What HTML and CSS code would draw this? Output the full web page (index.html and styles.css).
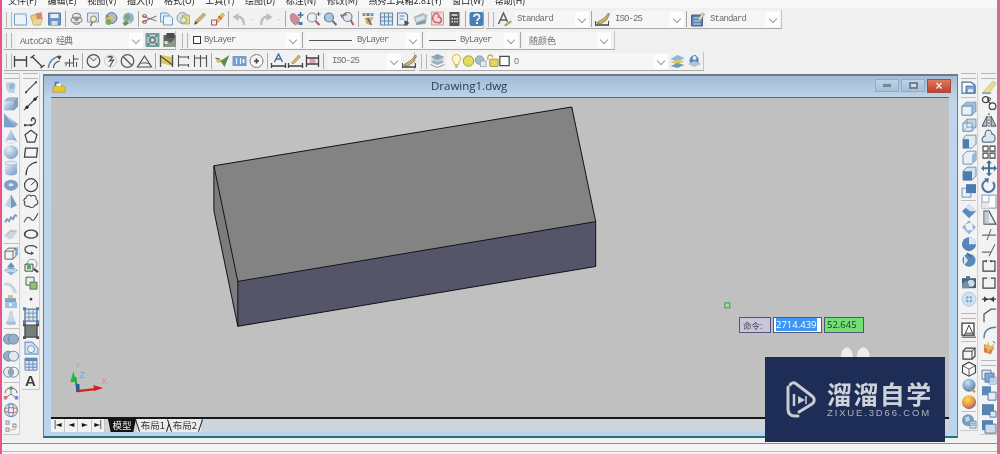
FILE: index.html
```html
<!DOCTYPE html>
<html lang="zh">
<head>
<meta charset="utf-8">
<title>Drawing1.dwg</title>
<link rel="stylesheet" href="styles.css">
</head>
<body>
<svg class="defs" xmlns="http://www.w3.org/2000/svg">
<defs>
<linearGradient id="gb" x1="0" y1="0" x2="1" y2="1"><stop offset="0" stop-color="#e4f0fb"/><stop offset="1" stop-color="#3f76b5"/></linearGradient>
<radialGradient id="gs" cx=".35" cy=".3" r=".8"><stop offset="0" stop-color="#dfeaf6"/><stop offset="1" stop-color="#4f7fb5"/></radialGradient>
<radialGradient id="gy" cx=".4" cy=".3" r=".8"><stop offset="0" stop-color="#ffd84a"/><stop offset=".55" stop-color="#e08a20"/><stop offset="1" stop-color="#5a2fa8"/></radialGradient>
<radialGradient id="gg" cx=".4" cy=".3" r=".8"><stop offset="0" stop-color="#bfe0f5"/><stop offset="1" stop-color="#2a5f9a"/></radialGradient>
</defs>
<symbol id="new" viewBox="0 0 16 16"><path d="M2 3h12v11H2z" fill="#eef5fc" stroke="#5e8fc0"/><path d="M10 3l4 4v-4z" fill="#b7d0ea"/></symbol>
<symbol id="open" viewBox="0 0 16 16"><path d="M1 5l8-3 1 4 3 1-2 7-7 0z" fill="#e8c860" stroke="#a98a3a" stroke-width=".7"/><path d="M6 3l6-2 1 6-5 2z" fill="#d8745e"/><path d="M3 10l8-2 1 4-7 2z" fill="#e9d690"/></symbol>
<symbol id="save" viewBox="0 0 16 16"><path d="M2 2h12v12H2z" fill="#5a86bc" stroke="#3f6a9e"/><path d="M4 3h8v4H4z" fill="#e6eef7"/><path d="M5 10h6v4H5z" fill="#cfdcea"/></symbol>
<symbol id="print" viewBox="0 0 16 16"><g fill="none" stroke="#7a7f8c" stroke-width="1.2"><ellipse cx="8" cy="5" rx="4" ry="2.6"/><ellipse cx="8" cy="9" rx="5.5" ry="2.8"/><path d="M5 12c1 2 5 2 6 0"/></g><path d="M6 8h4v2H6z" fill="#c46a6a"/></symbol>
<symbol id="prev" viewBox="0 0 16 16"><path d="M2 2h11v9H2z" fill="#d9e6f3" stroke="#6d8fb3"/><circle cx="8" cy="8" r="3" fill="#f3ecc0" stroke="#7a7a50"/><path d="M7 11l-2 4" stroke="#555" stroke-width="1.4"/></symbol>
<symbol id="pub" viewBox="0 0 16 16"><circle cx="9" cy="7" r="5.5" fill="#8fb4d8" stroke="#5b5f88"/><path d="M3 9c2-4 6-5 9-5l-2 5-5 4z" fill="#e2b93a"/><circle cx="6" cy="11" r="3" fill="#5fa04a"/><path d="M4 4l2 2" stroke="#7a4fa0" stroke-width="1.5"/></symbol>
<symbol id="web" viewBox="0 0 16 16"><circle cx="9" cy="7" r="5.5" fill="#7ea9cc"/><path d="M6 3c3 0 5 2 5 4l-3 2-3-2z" fill="#6f9a55"/><path d="M3 12l5-3 1 4-4 2z" fill="#5d7f4a"/><path d="M7 10h4v3" fill="#d6c25a"/></symbol>
<symbol id="cut" viewBox="0 0 16 16"><path d="M1 5l14 5M1 11l14-6" stroke="#6a6a78" stroke-width="1.1"/><ellipse cx="3" cy="5" rx="2" ry="1.4" fill="none" stroke="#a33" /><ellipse cx="3" cy="11" rx="2" ry="1.4" fill="none" stroke="#a33"/></symbol>
<symbol id="copy" viewBox="0 0 16 16"><path d="M2 2h7l2 2v7H2z" fill="#dbe8f5" stroke="#5e8fc0"/><path d="M5 5h7l2 2v7H5z" fill="#eef5fc" stroke="#5e8fc0"/></symbol>
<symbol id="paste" viewBox="0 0 16 16"><circle cx="7" cy="7" r="5.5" fill="#cfe0ee" stroke="#7a8c9c"/><path d="M7 4h7v9H7z" fill="#e7cf7a" stroke="#a98a3a" stroke-width=".7"/><circle cx="8" cy="9" r="3" fill="#d9e6c8" stroke="#6a8a4a" stroke-width=".7"/></symbol>
<symbol id="match" viewBox="0 0 16 16"><path d="M2 13l3-1 8-8-2-2-8 8z" fill="#d8a94a" stroke="#6a5a3a" stroke-width=".6"/><path d="M2 14l3-2-2-2z" fill="#333"/></symbol>
<symbol id="brush" viewBox="0 0 16 16"><path d="M6 10l7-8 2 2-7 8z" fill="#e9c43a" stroke="#8a6a20" stroke-width=".6"/><path d="M2 9h5v5H2z" fill="#e8eef5" stroke="#a33"/><path d="M9 5l3 3" stroke="#c33" stroke-width="1.5"/></symbol>
<symbol id="undo" viewBox="0 0 16 16"><path d="M12 14C13 8 9 5 5 6" fill="none" stroke="#b5b5b5" stroke-width="2.4"/><path d="M7 2L1 6l6 4z" fill="#b5b5b5"/></symbol>
<symbol id="redo" viewBox="0 0 16 16"><path d="M4 14C3 8 7 5 11 6" fill="none" stroke="#b5b5b5" stroke-width="2.4"/><path d="M9 2l6 4-6 4z" fill="#b5b5b5"/></symbol>
<symbol id="dot" viewBox="0 0 16 16"><path d="M6 8h4l-2 2z" fill="#b5b5b5"/></symbol>
<symbol id="pan" viewBox="0 0 16 16"><path d="M2 4c2-3 5-1 6 1 2 1 4 3 2 7l-3 2C3 12 1 8 2 4z" fill="#c87a86" stroke="#8a5a68" stroke-width=".6"/><path d="M12 1v6M9 4h6" stroke="#255a8a" stroke-width="1.6"/><path d="M10 11h4v3h-4z" fill="#2f6a9a"/></symbol>
<symbol id="zrt" viewBox="0 0 16 16"><circle cx="6.5" cy="6.5" r="4.5" fill="#eaf2f8" stroke="#6a7c8c" stroke-width="1.2"/><path d="M10 10l4 4" stroke="#8a5050" stroke-width="2"/><path d="M13 1v4M11 3h4" stroke="#4a4a4a"/></symbol>
<symbol id="zwin" viewBox="0 0 16 16"><circle cx="6.5" cy="6.5" r="4.5" fill="#9fc0de" stroke="#4d6a88" stroke-width="1.2"/><path d="M10 10l4 4" stroke="#5a5a5a" stroke-width="2.2"/></symbol>
<symbol id="zprev" viewBox="0 0 16 16"><circle cx="8" cy="6" r="4.5" fill="#dce8f2" stroke="#5d6f80" stroke-width="1.2"/><path d="M11 9l3 5" stroke="#a04a4a" stroke-width="2"/><path d="M1 4h6l-2-2M1 4l2 3" stroke="#444" fill="none"/></symbol>
<symbol id="props" viewBox="0 0 16 16"><g fill="#c454b0"><rect x="1" y="2" width="3" height="3"/></g><rect x="5" y="2" width="3" height="3" fill="#3a8a5a"/><rect x="9" y="2" width="3" height="3" fill="#5a8ac8"/><path d="M3 7l9-1-4 8-3-1z" fill="#caa53a"/><path d="M6 7l4 7" stroke="#3a3a7a" stroke-width="1.5"/></symbol>
<symbol id="dc" viewBox="0 0 16 16"><path d="M2 2h12v12H2z" fill="#dce8f2" stroke="#4d7a9e" stroke-width="1.2"/><path d="M2 6h12M2 10h12M6 2v12M10 2v12" stroke="#4d7a9e"/></symbol>
<symbol id="tool" viewBox="0 0 16 16"><path d="M2 2h8l2 2v10H2z" fill="#eaf2fa" stroke="#3f6ea0" stroke-width="1.1"/><path d="M4 5h5M4 8h4" stroke="#3f6ea0"/><path d="M9 9l5 3-5 3z" fill="#333"/></symbol>
<symbol id="sheet" viewBox="0 0 16 16"><path d="M1 6l9-4 5 2-2 9-9 1z" fill="#9fb3ba"/><path d="M3 7l9-3v4l-8 3z" fill="#d4e0e4"/><path d="M4 12l9-3v3l-9 2z" fill="#6f8a90"/></symbol>
<symbol id="mkp" viewBox="0 0 16 16"><path d="M2 1h12v13H2z" fill="#f3d4d4" stroke="#9a7a7a" stroke-width=".7"/><path d="M5 3c3-2 5 1 4 3 3 0 4 4 1 6l-5-1c-3-3-2-6 0-8z" fill="none" stroke="#d04a5a" stroke-width="1.6"/></symbol>
<symbol id="calc" viewBox="0 0 16 16"><path d="M3 1h10v14H3z" fill="#3a3a3a"/><path d="M5 3h6v2H5z" fill="#b8c4a0"/><path d="M5 7h1.500v1.500H5zM7.500 7H9v1.500H7.500zM10 7h1.500v1.500H10zM5 10h1.500v1.500H5zM7.500 10H9v1.500H7.500zM10 10h1.500v1.500H10z" fill="#ddd"/></symbol>
<symbol id="help" viewBox="0 0 16 16"><rect x="1" y="1" width="14" height="14" rx="2" fill="#2c6cb0"/><path d="M5.500 6c0-3.500 5.500-3.500 5.500 0 0 2-2.500 2-2.500 4" fill="none" stroke="#f2f6fa" stroke-width="1.700"/><path d="M7.500 11h2v2h-2z" fill="#f2f6fa"/></symbol>
<symbol id="ast" viewBox="0 0 16 16"><path d="M2 13L7 2l4 9M4 9h6" fill="none" stroke="#444" stroke-width="1.5"/><path d="M8 14l6-4 1 1-6 4z" fill="#d8a94a" stroke="#444" stroke-width=".5"/></symbol>
<symbol id="dst" viewBox="0 0 16 16"><path d="M1 14h13" stroke="#333" stroke-width="1.6"/><path d="M2 12l8-5 4-5 1 1-3 6-6 4z" fill="#d8a94a" stroke="#333" stroke-width=".6"/><path d="M1 10v5M14 10v5" stroke="#333"/></symbol>
<symbol id="tbs" viewBox="0 0 16 16"><path d="M2 4h11v11H2z" fill="#3d6ea8" stroke="#274a78"/><path d="M4 7h7M4 10h7M4 13h7" stroke="#cfe0f0"/><path d="M8 8l5-6 2 1-4 7z" fill="#d8d8a0" stroke="#555" stroke-width=".5"/></symbol>
<symbol id="w1" viewBox="0 0 16 16"><path d="M1 1h14v14H1z" fill="#5f8f8f"/><path d="M3 3h10v10H3z" fill="#d6e2e2"/><circle cx="8" cy="8" r="4" fill="#597a80"/><circle cx="8" cy="8" r="1.500" fill="#e6eeee"/><path d="M3 3h2v2H3zM11 3h2v2h-2zM3 11h2v2H3zM11 11h2v2h-2z" fill="#315a60"/></symbol>
<symbol id="w2" viewBox="0 0 16 16"><path d="M2 3h12v12H2z" fill="#4a4a4a"/><path d="M5 1h8v5H5z" fill="#2f2f2f"/><path d="M2 15l4-6 3 2 5-5v9z" fill="#7a8a7a"/><path d="M3 9h3v3H3z" fill="#ddd"/></symbol>
<symbol id="dl" viewBox="0 0 16 16"><path d="M2 3v11M14 3v11M2 7h12" stroke="#222" stroke-width="1.3" fill="none"/></symbol>
<symbol id="da" viewBox="0 0 16 16"><path d="M1 5l4-3M11 15l4-3M3 4l10 10" stroke="#222" stroke-width="1.3" fill="none"/></symbol>
<symbol id="dr" viewBox="0 0 16 16"><path d="M2 15C2 9 7 4 14 3" fill="none" stroke="#4d7fb0" stroke-width="1.5"/><path d="M7 15c0-3 2-6 6-7" fill="none" stroke="#333" stroke-width="1.2"/><path d="M10 3l5 0-2 4z" fill="#333"/></symbol>
<symbol id="dord" viewBox="0 0 16 16"><path d="M1 10h9M6 6v8M10 2v12M10 6h5M13 9v5" stroke="#333" fill="none" stroke-width="1"/><path d="M4 9l-2 4" stroke="#2e8a5a" stroke-width="1.4"/></symbol>
<symbol id="drad" viewBox="0 0 16 16"><circle cx="8" cy="8" r="6.300" fill="none" stroke="#333" stroke-width="1.2"/><path d="M4 4l4 4 3-3" stroke="#333" fill="none"/></symbol>
<symbol id="djog" viewBox="0 0 16 16"><path d="M9 3l-4 1h5l-3 4 4-1-4 7" stroke="#333" fill="none" stroke-width="1.2"/><circle cx="8" cy="8" r="6" fill="none" stroke="#aaa" stroke-width=".6"/></symbol>
<symbol id="ddia" viewBox="0 0 16 16"><circle cx="8" cy="8" r="6.300" fill="none" stroke="#444" stroke-width="1.3"/><path d="M4 4l8 8" stroke="#444" stroke-width="1.4"/></symbol>
<symbol id="dang" viewBox="0 0 16 16"><path d="M1 14h14L8 3z" fill="none" stroke="#333" stroke-width="1.2"/><path d="M4 11c3-2 6-1 9 0" fill="none" stroke="#333"/></symbol>
<symbol id="dq" viewBox="0 0 16 16"><path d="M2 2l12 2v9L2 10z" fill="#d7c34a"/><path d="M2 2v12M14 2v12M2 3l12 9" stroke="#333" stroke-width="1.3" fill="none"/></symbol>
<symbol id="dbase" viewBox="0 0 16 16"><path d="M3 2v12M13 3v3M13 11v3M3 4h10M3 12h10" stroke="#333" stroke-width="1.1" fill="none"/></symbol>
<symbol id="dcont" viewBox="0 0 16 16"><path d="M2 2v12M8 2v12M14 2v12M2 5h12" stroke="#333" stroke-width="1.1" fill="none"/></symbol>
<symbol id="qdim" viewBox="0 0 16 16"><path d="M2 5l6 2-3 3-3-1z" fill="#d6b43a"/><path d="M6 8l4 6 2-5 3-7-6 4z" fill="#3f7a3a"/><path d="M1 5l4 1" stroke="#333"/></symbol>
<symbol id="tol" viewBox="0 0 16 16"><rect x="1" y="3" width="14" height="10" fill="#5d8fc8"/><path d="M5 5v6M9 5v6" stroke="#eaf2fa" stroke-width="1.200"/><path d="M11 6h2v4h-2z" fill="#eaf2fa"/></symbol>
<symbol id="cen" viewBox="0 0 16 16"><circle cx="8" cy="8" r="6.500" fill="#f8f8f8" stroke="#666"/><path d="M8 5.500v5M5.500 8h5" stroke="#222" stroke-width="1.600"/></symbol>
<symbol id="aedit" viewBox="0 0 16 16"><path d="M4 9L8 1l4 8M5.500 6h5" stroke="#2f5f9a" stroke-width="1.500" fill="none"/><path d="M1 10v5M15 10v5M1 13h14" stroke="#222" stroke-width="1.300"/></symbol>
<symbol id="ped" viewBox="0 0 16 16"><path d="M1 10v5M15 10v5M1 13h14" stroke="#222" stroke-width="1.300"/><path d="M4 10l7-8 2 2-7 7z" fill="#d8a94a" stroke="#6a5a3a" stroke-width=".5"/></symbol>
<symbol id="dup" viewBox="0 0 16 16"><path d="M2 2v12M14 2v12M2 5h12M2 11h12" stroke="#222" stroke-width="1.300"/><rect x="5" y="6" width="6" height="4" fill="#d84a5a" opacity=".6"/></symbol>
<symbol id="lay" viewBox="0 0 16 16"><path d="M1 9l7 3 7-3-7-3z" fill="#8aa0b0"/><path d="M1 6.500l7 3 7-3-7-3z" fill="#b5c6d2"/><path d="M1 4l7 3 7-3-7-3z" fill="#7f98ac"/><path d="M1 11.500l7 3 7-3" stroke="#7a8a98" fill="none"/></symbol>
<symbol id="bulb" viewBox="0 0 14 16"><path d="M7 1a4.500 4.500 0 0 0-3 8l1 3h4l1-3a4.500 4.500 0 0 0-3-8z" fill="#fff7d0" stroke="#c0a838"/><path d="M5.500 13h3v2h-3z" fill="#99a"/></symbol>
<symbol id="sun" viewBox="0 0 14 16"><circle cx="7" cy="8" r="5.600" fill="#e5d94a" stroke="#888a40"/></symbol>
<symbol id="frz" viewBox="0 0 14 16"><circle cx="6" cy="7" r="4.600" fill="#9fb5c6" stroke="#7a8c9a"/><rect x="7" y="8" width="6" height="6" fill="#e3e9ee" stroke="#96a5b0"/></symbol>
<symbol id="lock" viewBox="0 0 14 16"><path d="M2 7V4a2.500 2.500 0 0 1 5 0" fill="none" stroke="#b39a3a" stroke-width="1.300"/><rect x="4" y="6" width="9" height="8" rx="1" fill="#e2d24a" stroke="#9a8a30"/></symbol>
<symbol id="sq" viewBox="0 0 14 16"><rect x="2" y="3" width="10" height="10" fill="#fff" stroke="#333" stroke-width="1.300"/></symbol>
<symbol id="lay2" viewBox="0 0 16 16"><path d="M1 6l7-4 7 3-7 4z" fill="#7fb0d6"/><path d="M1 9l7-2 7 1-7 4z" fill="#d9c24a"/><path d="M1 13l7-3 7 2-7 3z" fill="#5f8aaa"/></symbol>
<symbol id="lay3" viewBox="0 0 16 16"><path d="M3 8c0-4 3-6 6-6l3 3v5l-8 1z" fill="#3e77ad"/><circle cx="8" cy="5" r="2" fill="#dfe8f0"/><path d="M1 11l7-3 7 3-7 3z" fill="#a9bccb"/></symbol>
<symbol id="orb" viewBox="0 0 16 16"><path d="M3 3h8l2 3-2 8-6-1-2-5z" fill="#a8c5e2"/><path d="M6 5l5-1v5l-4 1z" fill="#6d9cc8"/></symbol>
<symbol id="box" viewBox="0 0 16 16"><path d="M1 6l4-4h10v9l-4 4H1z" fill="#7fa0c0"/><path d="M1 6h10v9H1z" fill="url(#gb)"/><path d="M11 6l4-4v9l-4 4z" fill="#5b7fa0"/></symbol>
<symbol id="wed" viewBox="0 0 16 16"><path d="M1 1l14 11-3 3H1z" fill="url(#gb)"/><path d="M1 1l11 14H1z" fill="#4d82b8"/></symbol>
<symbol id="cone" viewBox="0 0 16 16"><path d="M8 1L2 13c2 3 10 3 12 0z" fill="url(#gb)"/><path d="M2 13c2 3 10 3 12 0-3-1.500-9-1.500-12 0z" fill="#e4edf6"/></symbol>
<symbol id="sph" viewBox="0 0 16 16"><circle cx="8" cy="8" r="7" fill="url(#gs)"/></symbol>
<symbol id="cyl" viewBox="0 0 16 16"><path d="M2 3v10c2 3 10 3 12 0V3z" fill="url(#gb)"/><ellipse cx="8" cy="3" rx="6" ry="2" fill="#dce8f4" stroke="#6a8fb5" stroke-width=".6"/></symbol>
<symbol id="tor" viewBox="0 0 16 16"><ellipse cx="8" cy="8" rx="7" ry="5.500" fill="#4f80b0"/><ellipse cx="8" cy="7.500" rx="2.500" ry="1.500" fill="#dce8f2"/></symbol>
<symbol id="pyr" viewBox="0 0 16 16"><path d="M8 1L2 12l6 3z" fill="#a9c6e2"/><path d="M8 1l6 11-6 3z" fill="#4378ad"/></symbol>
<symbol id="hel" viewBox="0 0 16 16"><path d="M2 13l2-3 2 2 2-4 2 2 2-4 2 1" fill="none" stroke="#4a78a8" stroke-width="1.800"/></symbol>
<symbol id="pla" viewBox="0 0 16 16"><path d="M1 10l6-7 8 1-5 8-4 1z" fill="#c0cddb"/><path d="M3 9l5-4 5 0" stroke="#8aa0b5" fill="none"/></symbol>
<symbol id="pol" viewBox="0 0 16 16"><path d="M2 6h8v8H2z" fill="#eef3f8" stroke="#333"/><path d="M2 6l3-3h8v8l-3 3M10 6l3-3" fill="none" stroke="#333"/><path d="M13 3l2-2v8l-2 2z" fill="#5b8ec0"/></symbol>
<symbol id="ext" viewBox="0 0 16 16"><path d="M1 9l7-4 7 4-7 5z" fill="#5d8fc0"/><path d="M8 1L4 6h8z" fill="#2f6aa8"/><path d="M3 8h10v3H3z" fill="#aac7e2"/></symbol>
<symbol id="sw" viewBox="0 0 16 16"><path d="M1 5c5-2 10 1 13 9l-3 1C9 9 5 6 2 8z" fill="#b4c9dc"/></symbol>
<symbol id="rev" viewBox="0 0 16 16"><path d="M2 4h11v4H2z" fill="#4a8ac4"/><path d="M2 8h12v6H2z" fill="#7cb0dc"/><path d="M5 1h5v3H5z" fill="#d9a34a"/><path d="M6 9h3v3H6z" fill="#e4f0fb"/></symbol>
<symbol id="lof" viewBox="0 0 16 16"><path d="M6 1h4v4l3 8c0 2-10 2-10 0l3-8z" fill="#b6cde2"/><ellipse cx="8" cy="13" rx="5" ry="1.800" fill="#8fb0d0"/></symbol>
<symbol id="uni" viewBox="0 0 16 16"><circle cx="5.500" cy="8" r="5" fill="#6f95b8" stroke="#3f6080"/><circle cx="10.500" cy="8" r="5" fill="#6f95b8" stroke="#3f6080"/></symbol>
<symbol id="sub" viewBox="0 0 16 16"><circle cx="5.500" cy="8" r="5" fill="#6f95b8" stroke="#3f6080"/><circle cx="10.500" cy="8" r="5" fill="#dbe6ee" stroke="#3f6080"/></symbol>
<symbol id="int" viewBox="0 0 16 16"><circle cx="5.500" cy="8" r="5" fill="#dbe6ee" stroke="#3f6080"/><circle cx="10.500" cy="8" r="5" fill="none" stroke="#3f6080"/><path d="M8 4a5 5 0 0 1 0 8 5 5 0 0 1 0-8z" fill="#5f87ad"/></symbol>
<symbol id="m3" viewBox="0 0 16 16"><path d="M8 2v7l-6 4M8 9l6 4" stroke="#555" fill="none"/><circle cx="8" cy="3" r="2" fill="#3f9a4a"/><circle cx="2.500" cy="12.500" r="2" fill="#c84a4a"/><circle cx="13.500" cy="12.500" r="2" fill="#3f6ac8"/><path d="M2 8c0-7 12-7 12 0" fill="none" stroke="#333"/></symbol>
<symbol id="r3" viewBox="0 0 16 16"><circle cx="8" cy="8" r="6.500" fill="none" stroke="#3f9a6a" stroke-width="1.200"/><ellipse cx="8" cy="8" rx="6.500" ry="2.500" fill="none" stroke="#c84a4a" stroke-width="1.200"/><ellipse cx="8" cy="8" rx="2.500" ry="6.500" fill="none" stroke="#3f6ac8" stroke-width="1.200"/></symbol>
<symbol id="al3" viewBox="0 0 16 16"><path d="M3 3h3v3H3zM3 10h3v3H3zM10 6h3v3h-3z" fill="none" stroke="#777" stroke-width="1.100"/><path d="M7 12l6-1" stroke="#c8a040"/></symbol>
<symbol id="li" viewBox="0 0 16 16"><path d="M3 13L13 3" stroke="#2a2a2a" stroke-width="1.200"/><path d="M2 12h2v2H2zM12 2h2v2h-2z" fill="#2a2a2a"/></symbol>
<symbol id="xl" viewBox="0 0 16 16"><path d="M1 15L15 1" stroke="#222" stroke-width="1.300"/><circle cx="4" cy="12" r="1.600"/><circle cx="12" cy="4" r="1.600"/></symbol>
<symbol id="pli" viewBox="0 0 16 16"><path d="M1 13h7c5 0 6-7 2-7-2 0-2 2-1 3" fill="none" stroke="#222" stroke-width="1.200"/><path d="M1 12h2v2H1zM7 12h2v2H7zM9 5h2v2H9z" fill="#222"/></symbol>
<symbol id="pgn" viewBox="0 0 16 16"><path d="M8 2l6 4.500-2.300 7.500H4.300L2 6.500z" fill="none" stroke="#222" stroke-width="1.200"/></symbol>
<symbol id="rec" viewBox="0 0 16 16"><path d="M2.500 4h12l-1 9h-12z" fill="none" stroke="#222" stroke-width="1.300"/></symbol>
<symbol id="arc" viewBox="0 0 16 16"><path d="M3 15C3 8 7 3 14 2" fill="none" stroke="#222" stroke-width="1.300"/></symbol>
<symbol id="cir" viewBox="0 0 16 16"><circle cx="8" cy="8" r="6.500" fill="none" stroke="#222" stroke-width="1.200"/><path d="M8 8l4-4" stroke="#222"/></symbol>
<symbol id="cld" viewBox="0 0 16 16"><path d="M3 5c0-3 4-4 5-2 2-2 6 0 5 3 3 2 2 6-1 6-1 3-5 3-6 1-3 1-6-2-4-4-2-1-1-4 1-4z" fill="none" stroke="#333" stroke-width="1.100"/></symbol>
<symbol id="spl" viewBox="0 0 16 16"><path d="M1 13c3-6 5-6 7-3s4 0 7-6" fill="none" stroke="#333" stroke-width="1.100"/></symbol>
<symbol id="ell" viewBox="0 0 16 16"><ellipse cx="8" cy="8" rx="6.500" ry="4" fill="none" stroke="#222" stroke-width="1.400"/><path d="M1 8h2M13 8h2" stroke="#222"/></symbol>
<symbol id="ela" viewBox="0 0 16 16"><path d="M14 6c-2-4-12-3-12 1s5 5 8 4" fill="none" stroke="#333" stroke-width="1.300"/><path d="M8 9l3 2-3 2z" fill="#333"/></symbol>
<symbol id="ins" viewBox="0 0 16 16"><circle cx="9" cy="6" r="5" fill="none" stroke="#6a8a9c"/><path d="M2 6h8v7H2z" fill="#dfe9e0" stroke="#333"/><path d="M4 5l4 1v5H4z" fill="#4a9a4a"/><path d="M11 11l4 3" stroke="#222" stroke-width="2"/></symbol>
<symbol id="blk" viewBox="0 0 16 16"><path d="M3 2h8v8H3z" fill="#e6efe6" stroke="#444"/><path d="M7 7h7v7H7z" fill="#7fb86a" stroke="#3a6a3a"/></symbol>
<symbol id="pnt" viewBox="0 0 16 16"><circle cx="8" cy="8" r="1.300" fill="#222"/></symbol>
<symbol id="hat" viewBox="0 0 16 16"><path d="M2 2h12v12H2z" fill="#d8e4f0" stroke="#3d6a98" stroke-width="1.400"/><path d="M2 6h12M2 10h12M6 2v12M10 2v12" stroke="#3d6a98" stroke-width=".7"/><path d="M0 0h3v3H0zM13 0h3v3h-3zM0 13h3v3H0zM13 13h3v3h-3z" fill="#3d6a98"/></symbol>
<symbol id="gra" viewBox="0 0 16 16"><path d="M2 2h12v12H2z" fill="#5f6a68" stroke="#333" stroke-width="1.400"/><path d="M0 0h3v3H0zM13 0h3v3h-3zM0 13h3v3H0zM13 13h3v3h-3z" fill="#333"/></symbol>
<symbol id="reg" viewBox="0 0 16 16"><path d="M2 2h7l6 6v6H2z" fill="#cfe0f0" stroke="#5d89b8" stroke-width="1.100"/><circle cx="8" cy="9" r="3.500" fill="#eaf2fa" stroke="#5d89b8"/></symbol>
<symbol id="tab" viewBox="0 0 16 16"><path d="M2 2h12v12H2z" fill="#dfe9f5" stroke="#4b74b0"/><path d="M2 2h12v3H2z" fill="#4b74b0"/><path d="M2 8h12M2 11h12M6 5v9M10 5v9" stroke="#4b74b0"/></symbol>
<symbol id="r1" viewBox="0 0 16 16"><path d="M1 3h9l4 3v8H1z" fill="#fff" stroke="#2f5f90" stroke-width="1.200"/><path d="M5 7h9v7H5z" fill="#6d9cc8" stroke="#2f5f90"/><path d="M7 10h5v3H7z" fill="#dbe8f4"/></symbol>
<symbol id="cb1" viewBox="0 0 16 16"><path d="M1 6l4-4h10v9l-4 4H1z" fill="#8fb4d6" stroke="#3d6a98" stroke-width=".6"/><path d="M1 6h10v9H1z" fill="#e6f0f9" stroke="#3d6a98" stroke-width=".8"/></symbol>
<symbol id="cb2" viewBox="0 0 16 16"><path d="M2 6l4-4h9v8l-4 4H2z" fill="#b5cfe6" stroke="#4d7aa8" stroke-width=".8"/><path d="M2 6h9v8H2z" fill="#dce9f4" stroke="#4d7aa8" stroke-width=".8"/><path d="M6 2v8h9M6 10l-4 4" stroke="#4d7aa8" fill="none" stroke-width=".7"/></symbol>
<symbol id="cb3" viewBox="0 0 16 16"><path d="M2 6l3-4h10v9l-4 4H2z" fill="#dce9f4" stroke="#3d6a98" stroke-width=".8"/><path d="M2 6h6v9H2z" fill="#2f6aa8"/></symbol>
<symbol id="cb4" viewBox="0 0 16 16"><path d="M2 6l4-4h9v9l-4 4H2z" fill="#e4eef7" stroke="#3d6a98" stroke-width=".8"/><path d="M11 6l4-4v9l-4 4z" fill="#86aed2"/></symbol>
<symbol id="cb5" viewBox="0 0 16 16"><path d="M2 6l4-4h9v9l-4 4H2z" fill="#cde0f0" stroke="#3d6a98" stroke-width=".8"/><path d="M2 6h9v9H2z" fill="#2d68a6"/></symbol>
<symbol id="cb6" viewBox="0 0 16 16"><path d="M1 6h9v9H1z" fill="#e4eef7" stroke="#3d6a98" stroke-width=".8"/><path d="M5 2h10v9H5z" fill="#2d68a6"/></symbol>
<symbol id="d1" viewBox="0 0 16 16"><path d="M8 1l7 7-7 7-7-7z" fill="#3f7ab8"/><path d="M8 1l7 7-6 0-5-4z" fill="#cfe2f2"/></symbol>
<symbol id="d2" viewBox="0 0 16 16"><path d="M8 1l7 7-7 7-7-7z" fill="#88acd0"/><path d="M4 5l7-2 1 8-6 0z" fill="#e9f1f8"/></symbol>
<symbol id="d3" viewBox="0 0 16 16"><circle cx="8" cy="8" r="7" fill="#3a74ae"/><path d="M8 1a7 7 0 0 1 7 7H8z" fill="#d6e6f4"/></symbol>
<symbol id="d4" viewBox="0 0 16 16"><circle cx="8" cy="8" r="6.500" fill="#3f78b0"/><path d="M3 3l4 5-4 5z" fill="#d6e6f4"/><path d="M6 1l4 4" stroke="#2a5a8a" stroke-width="2"/></symbol>
<symbol id="pho" viewBox="0 0 16 16"><path d="M1 4h14v10H1z" fill="#2e4a66"/><circle cx="10" cy="9" r="3.500" fill="#c9d9e8"/><path d="M1 10l4-4 3 4v4H1z" fill="#5d7f9e"/><path d="M5 2h4v2H5z" fill="#3a5a78"/></symbol>
<symbol id="tar" viewBox="0 0 16 16"><circle cx="8" cy="8" r="7" fill="#cfe0ef" stroke="#a9c2d8"/><circle cx="8" cy="8" r="3.500" fill="#6a9ccc"/><path d="M8 4v8M4 8h8" stroke="#e9f1f8"/></symbol>
<symbol id="abx" viewBox="0 0 16 16"><rect x="1" y="1" width="12" height="12" fill="#fff" stroke="#222" stroke-width="1.300"/><path d="M3 14L8 3l5 11M5 11h6M1 15h14" stroke="#222" fill="none"/></symbol>
<symbol id="cu" viewBox="0 0 16 16"><path d="M2 6l3-3h9v8l-3 3H2z" fill="#f4f4f4" stroke="#222" stroke-width="1.200"/><path d="M2 6h9v8M11 6l3-3" fill="none" stroke="#222"/></symbol>
<symbol id="hex" viewBox="0 0 16 16"><path d="M8 1l6.500 3.500v7L8 15l-6.500-3.500v-7z" fill="#fafafa" stroke="#222" stroke-width="1.100"/><path d="M1.500 4.500L8 8l6.500-3.500M8 8v7" fill="none" stroke="#222" stroke-width=".8"/></symbol>
<symbol id="glo" viewBox="0 0 16 16"><circle cx="8" cy="7" r="6.500" fill="url(#gg)"/><path d="M9 10l5 4" stroke="#a58a3a" stroke-width="2"/></symbol>
<symbol id="bal" viewBox="0 0 16 16"><circle cx="8" cy="8" r="7" fill="url(#gy)"/></symbol>
<symbol id="glb" viewBox="0 0 16 16"><circle cx="7" cy="7" r="6" fill="#5e8fb8"/><path d="M4 4l4-1 1 4-4 2z" fill="#b6d0e4"/><path d="M9 8h6v7H9z" fill="#dce8f2" stroke="#5e7f9e"/><path d="M10 10h4M10 12h4" stroke="#5e7f9e"/></symbol>
<symbol id="era" viewBox="0 0 16 16"><path d="M2 13L12 2l3 2L8 14z" fill="#e7dd7a" stroke="#a9a060" stroke-width=".6"/><path d="M1 14h9" stroke="#6a8ab0" stroke-width="1.500"/></symbol>
<symbol id="cop" viewBox="0 0 16 16"><circle cx="4.500" cy="4.500" r="3" fill="#fff" stroke="#222" stroke-width="1.200"/><circle cx="11.500" cy="11" r="3.300" fill="#fff" stroke="#222" stroke-width="1.200"/><path d="M7 6l3 3" stroke="#222" stroke-width="1.200"/><circle cx="8" cy="4" r="1.500" fill="none" stroke="#222"/></symbol>
<symbol id="mir" viewBox="0 0 16 16"><path d="M8 1v14" stroke="#222" stroke-dasharray="2 1"/><path d="M6 4v10H1zM10 4v10h5z" fill="#a6b6c6" stroke="#222" stroke-width=".9"/></symbol>
<symbol id="off" viewBox="0 0 16 16"><path d="M7 2c4 0 4 4 4 4 4 0 4 8 0 8H2c-2-3 0-6 2-6 0-3 1-6 3-6z" fill="#dbe6f0" stroke="#44607c" stroke-width="1.200"/></symbol>
<symbol id="arr" viewBox="0 0 16 16"><path d="M2 2h5v5H2zM9 2h5v5H9zM2 9h5v5H2zM9 9h5v5H9z" fill="#fff" stroke="#222" stroke-width="1.100"/></symbol>
<symbol id="mov" viewBox="0 0 16 16"><path d="M8 0l3 3H9v4h4V5l3 3-3 3V9H9v4h2l-3 3-3-3h2V9H3v2L0 8l3-3v2h4V3H5z" fill="#26598a"/></symbol>
<symbol id="rot" viewBox="0 0 16 16"><path d="M6 3a6 6 0 1 0 6 2" fill="none" stroke="#2a5f90" stroke-width="2"/><path d="M3 1l5 0-1 5z" fill="#2a5f90"/></symbol>
<symbol id="sca" viewBox="0 0 16 16"><path d="M1 2h14v13H1z" fill="#fff" stroke="#8aa0b4" stroke-width="1.200"/><path d="M1 9h7v6H1z" fill="#e0e6ec"/><path d="M8 9V2M1 9h7" stroke="#8aa0b4"/></symbol>
<symbol id="str" viewBox="0 0 16 16"><path d="M3 2h5l7 13H3z" fill="#e6ecf2" stroke="#333" stroke-width="1.100"/><path d="M3 2h5v13H3z" fill="#9db0c0" opacity=".6"/></symbol>
<symbol id="tri" viewBox="0 0 16 16"><path d="M1 9h14M10 3l-4 11" stroke="#555" stroke-width="1.100"/></symbol>
<symbol id="ext2" viewBox="0 0 16 16"><path d="M1 10h9M14 2L8 14" stroke="#555" stroke-width="1.100"/></symbol>
<symbol id="bk1" viewBox="0 0 16 16"><path d="M2 3h12v10H2z" fill="none" stroke="#222" stroke-width="1.200"/><path d="M6 3h3" stroke="#e8e8e8" stroke-width="2"/><path d="M5 2v2M10 2v2" stroke="#222" stroke-width="1.200"/></symbol>
<symbol id="bk2" viewBox="0 0 16 16"><path d="M2 3h12v10H2z" fill="none" stroke="#222" stroke-width="1.200"/><path d="M6 3h4" stroke="#f0f0f0" stroke-width="2"/></symbol>
<symbol id="joi" viewBox="0 0 16 16"><path d="M1 8h14" stroke="#222" stroke-width="1.300"/><path d="M3 5l4 3-4 3zM13 5L9 8l4 3z" fill="#222"/></symbol>
<symbol id="cha" viewBox="0 0 16 16"><path d="M3 15V7l7-5h5" fill="none" stroke="#444" stroke-width="1.300"/></symbol>
<symbol id="fil" viewBox="0 0 16 16"><path d="M3 15c0-7 4-11 12-11" fill="none" stroke="#3a6ea0" stroke-width="1.500"/></symbol>
<symbol id="exp" viewBox="0 0 16 16"><path d="M3 4l10 3-3 7-7-2z" fill="#d8682a"/><path d="M7 1l2 5 5-3-3 5 4 2-6-1-2 4-1-5-4-1 4-2z" fill="#d8b84a"/><path d="M12 1l2 2" stroke="#333"/></symbol>
<symbol id="o1" viewBox="0 0 16 16"><path d="M1 1h9v9H1z" fill="#e2ecf6" stroke="#3d6a98"/><path d="M4 4h9v9H4z" fill="#6d9cc8" stroke="#3d6a98"/><path d="M8 8h7v7H8z" fill="#e2ecf6" stroke="#3d6a98" opacity=".6"/></symbol>
<symbol id="o2" viewBox="0 0 16 16"><path d="M1 1h9v9H1z" fill="#3f78b0"/><path d="M7 7h8v8H7z" fill="#e2ecf6" stroke="#3d6a98"/></symbol>
<symbol id="o3" viewBox="0 0 16 16"><path d="M1 2h12v11H1z" fill="#3a70a8"/><path d="M9 9h6v6H9z" fill="#dbe6f0" stroke="#3d6a98"/></symbol>
<symbol id="o4" viewBox="0 0 16 16"><path d="M1 2h11v10H1z" fill="#3a70a8"/><path d="M4 6h11v9H4z" fill="#c3d7ea" stroke="#3d6a98"/></symbol>
</svg>

<div class="app">
  <nav class="menu">
    <span>文件(F)</span><span>编辑(E)</span><span>视图(V)</span><span>插入(I)</span><span>格式(O)</span><span>工具(T)</span><span>绘图(D)</span><span>标注(N)</span><span>修改(M)</span><span>燕秀工具箱2.81(Y)</span><span>窗口(W)</span><span>帮助(H)</span>
  </nav>

  <div class="row">
    <div class="tb tb-a">
      <b class="grip"></b>
      <svg class="i"><use href="#new"/></svg><svg class="i"><use href="#open"/></svg><svg class="i"><use href="#save"/></svg><b class="sep"></b>
      <svg class="i"><use href="#print"/></svg><svg class="i"><use href="#prev"/></svg><svg class="i"><use href="#pub"/></svg><svg class="i"><use href="#web"/></svg><b class="sep"></b>
      <svg class="i"><use href="#cut"/></svg><svg class="i"><use href="#copy"/></svg><svg class="i"><use href="#paste"/></svg><svg class="i"><use href="#match"/></svg><svg class="i"><use href="#brush"/></svg><b class="sep"></b>
      <svg class="i"><use href="#undo"/></svg><svg class="i nar"><use href="#dot"/></svg><svg class="i"><use href="#redo"/></svg><svg class="i nar"><use href="#dot"/></svg><b class="sep"></b>
      <svg class="i"><use href="#pan"/></svg><svg class="i"><use href="#zrt"/></svg><svg class="i"><use href="#zwin"/></svg><svg class="i"><use href="#zprev"/></svg><b class="sep"></b>
      <svg class="i"><use href="#props"/></svg><svg class="i"><use href="#dc"/></svg><svg class="i"><use href="#tool"/></svg><svg class="i"><use href="#sheet"/></svg><svg class="i"><use href="#mkp"/></svg><svg class="i"><use href="#calc"/></svg><b class="sep"></b>
      <svg class="i"><use href="#help"/></svg>
    </div>
    <div class="tb tb-b">
      <b class="grip"></b>
      <svg class="i"><use href="#ast"/></svg>
      <div class="combo w76"><span class="mono">Standard</span><i class="chev"></i></div><b class="sep"></b>
      <svg class="i"><use href="#dst"/></svg>
      <div class="combo w73"><span class="mono">ISO-25</span><i class="chev"></i></div><b class="sep"></b>
      <svg class="i"><use href="#tbs"/></svg>
      <div class="combo w74"><span class="mono">Standard</span><i class="chev"></i></div>
    </div>
  </div>

  <div class="row">
    <div class="tb tb-c">
      <b class="grip"></b>
      <div class="combo w127 ml"><span class="mono">AutoCAD 经典</span><i class="chev"></i></div>
      <svg class="i"><use href="#w1"/></svg><svg class="i"><use href="#w2"/></svg>
    </div>
    <div class="tb tb-d">
      <b class="grip"></b>
      <div class="combo w110"><span class="sw"></span><span class="mono">ByLayer</span><i class="chev"></i></div><b class="sep"></b>
      <div class="combo w115"><span class="ln"></span><span class="mono">ByLayer</span><i class="chev"></i></div><b class="sep"></b>
      <div class="combo w93"><span class="ln short"></span><span class="mono">ByLayer</span><i class="chev"></i></div><b class="sep"></b>
      <div class="combo w88"><span class="cjk">随颜色</span><i class="chev"></i></div>
    </div>
  </div>

  <div class="row">
    <div class="tb tb-e">
      <b class="grip"></b>
      <svg class="i"><use href="#dl"/></svg><svg class="i"><use href="#da"/></svg><svg class="i"><use href="#dr"/></svg><svg class="i"><use href="#dord"/></svg><b class="sep"></b>
      <svg class="i"><use href="#drad"/></svg><svg class="i"><use href="#djog"/></svg><svg class="i"><use href="#ddia"/></svg><svg class="i"><use href="#dang"/></svg><b class="sep"></b>
      <svg class="i"><use href="#dq"/></svg><svg class="i"><use href="#dbase"/></svg><svg class="i"><use href="#dcont"/></svg><b class="sep"></b>
      <svg class="i"><use href="#qdim"/></svg><svg class="i"><use href="#tol"/></svg><svg class="i"><use href="#cen"/></svg><b class="sep"></b>
      <svg class="i"><use href="#aedit"/></svg><svg class="i"><use href="#ped"/></svg><svg class="i"><use href="#dup"/></svg><b class="sep"></b>
      <div class="combo w73 ml"><span class="mono">ISO-25</span><i class="chev"></i></div>
      <svg class="i"><use href="#dst"/></svg>
    </div>
    <div class="tb tb-f">
      <b class="grip"></b>
      <svg class="i"><use href="#lay"/></svg>
      <div class="combo w221">
        <svg class="s"><use href="#bulb"/></svg><svg class="s"><use href="#sun"/></svg><svg class="s"><use href="#frz"/></svg><svg class="s"><use href="#lock"/></svg><svg class="s"><use href="#sq"/></svg>
        <span class="zero">0</span><i class="chev"></i>
      </div>
      <svg class="i"><use href="#lay2"/></svg><svg class="i"><use href="#lay3"/></svg>
    </div>
  </div>

  <main class="main">
    <aside class="dock dock-l">
      <div class="col">
        <b class="hgrip"></b>
        <svg class="v"><use href="#orb"/></svg><svg class="v"><use href="#box"/></svg><svg class="v"><use href="#wed"/></svg><svg class="v"><use href="#cone"/></svg><svg class="v"><use href="#sph"/></svg><svg class="v"><use href="#cyl"/></svg><svg class="v"><use href="#tor"/></svg><svg class="v"><use href="#pyr"/></svg><svg class="v"><use href="#hel"/></svg><svg class="v"><use href="#pla"/></svg>
        <b class="hsep"></b>
        <svg class="v"><use href="#pol"/></svg><svg class="v"><use href="#ext"/></svg><svg class="v"><use href="#sw"/></svg><svg class="v"><use href="#rev"/></svg><svg class="v"><use href="#lof"/></svg>
        <b class="hsep big"></b>
        <svg class="v"><use href="#uni"/></svg><svg class="v"><use href="#sub"/></svg><svg class="v"><use href="#int"/></svg>
        <b class="hsep big"></b>
        <svg class="v"><use href="#m3"/></svg><svg class="v"><use href="#r3"/></svg><svg class="v"><use href="#al3"/></svg>
      </div>
      <div class="col">
        <b class="hgrip"></b>
        <svg class="v"><use href="#li"/></svg><svg class="v"><use href="#xl"/></svg><svg class="v"><use href="#pli"/></svg><svg class="v"><use href="#pgn"/></svg><svg class="v"><use href="#rec"/></svg><svg class="v"><use href="#arc"/></svg><svg class="v"><use href="#cir"/></svg><svg class="v"><use href="#cld"/></svg><svg class="v"><use href="#spl"/></svg><svg class="v"><use href="#ell"/></svg><svg class="v"><use href="#ela"/></svg><svg class="v"><use href="#ins"/></svg><svg class="v"><use href="#blk"/></svg><svg class="v"><use href="#pnt"/></svg><svg class="v"><use href="#hat"/></svg><svg class="v"><use href="#gra"/></svg><svg class="v"><use href="#reg"/></svg><svg class="v"><use href="#tab"/></svg>
        <span class="v atext">A</span>
      </div>
    </aside>

    <section class="win">
      <header class="title">
        <svg class="app-ico" viewBox="0 0 16 16"><path d="M1 8l6-3 8 3v6H1z" fill="#e9c52e" stroke="#8a7a20" stroke-width=".5"/><path d="M3 2h5v5H3z" fill="#4d7ab8"/><path d="M5 4h5v3H5z" fill="#eef3f8"/></svg>
        <span class="title-t">Drawing1.dwg</span>
        <div class="wbtns">
          <span class="wb"><i class="g-min"></i></span><span class="wb"><i class="g-max"></i></span><span class="wb close"><i class="g-x">×</i></span>
        </div>
      </header>
      <div class="canvas">
        <svg class="draw" viewBox="51 98 898 320">
          <polygon points="213,166 237,282 237,327 213,211" fill="#7c7c7e"/>
          <polygon points="213,166 572,107 596,222 237,282" fill="#838383"/>
          <polygon points="237,282 596,222 596,267 237,327" fill="#55556a"/>
          <g fill="none" stroke="#111" stroke-width="1">
            <polyline points="213,166 572,107 596,222 596,267 237,327 213,211 213,166"/>
            <polyline points="213,166 237,282 596,222"/>
            <path d="M237,282V327"/>
          </g>
          <ellipse cx="848" cy="358" rx="6" ry="10" fill="#ececec"/>
          <ellipse cx="864.500" cy="358" rx="6.500" ry="10" fill="#ececec"/>
          <rect x="725.500" y="303.500" width="5" height="5" fill="#b4d4a8" stroke="#3aa04a"/>
          <g class="ucs">
            <path d="M76 392L74 378" stroke="#2a9a3a" stroke-width="2"/>
            <path d="M72 372l3 11h-6z" fill="#14c03a"/>
            <path d="M76.500 385v8" stroke="#1f5fa0" stroke-width="3.500"/>
            <path d="M76 392l18-2" stroke="#d02020" stroke-width="2.200"/>
            <path d="M102 389l-10-3 1 6z" fill="#d82020"/>
            <text x="74" y="369" class="ut ut-y">Y</text>
            <text x="78" y="379" class="ut ut-z">Z</text>
            <text x="100" y="385" class="ut ut-x">X</text>
          </g>
        </svg>
        <div class="cmd">
          <span class="cmd-l">命令:</span>
          <span class="cmd-i"><em>2714.439</em></span>
          <span class="cmd-g">52.645</span>
        </div>
      </div>
      <div class="tabs">
        <div class="nav"><span>|◄</span><span>◄</span><span>►</span><span>►|</span></div>
        <span class="tab on">模型</span><span class="tab">布局1</span><span class="tab">布局2</span>
      </div>
    </section>

    <aside class="dock dock-r">
      <div class="col">
        <b class="hgrip"></b>
        <svg class="v"><use href="#r1"/></svg>
        <b class="hsep big"></b>
        <svg class="v"><use href="#cb1"/></svg><svg class="v"><use href="#cb2"/></svg><svg class="v"><use href="#cb3"/></svg><svg class="v"><use href="#cb4"/></svg><svg class="v"><use href="#cb5"/></svg><svg class="v"><use href="#cb6"/></svg>
        <b class="hsep big"></b>
        <svg class="v"><use href="#d1"/></svg><svg class="v"><use href="#d2"/></svg><svg class="v"><use href="#d3"/></svg><svg class="v"><use href="#d4"/></svg>
        <b class="hsep clear"></b>
        <svg class="v"><use href="#pho"/></svg><svg class="v"><use href="#tar"/></svg>
        <b class="hgrip mid wide"></b>
        <svg class="v"><use href="#abx"/></svg>
        <b class="hsep wider"></b>
        <svg class="v"><use href="#cu"/></svg><svg class="v"><use href="#hex"/></svg><svg class="v"><use href="#glo"/></svg><svg class="v"><use href="#bal"/></svg>
        <b class="hsep"></b>
        <svg class="v"><use href="#glb"/></svg>
      </div>
      <div class="col">
        <b class="hgrip"></b>
        <svg class="v"><use href="#era"/></svg><svg class="v"><use href="#cop"/></svg><svg class="v"><use href="#mir"/></svg><svg class="v"><use href="#off"/></svg><svg class="v"><use href="#arr"/></svg><svg class="v"><use href="#mov"/></svg><svg class="v"><use href="#rot"/></svg><svg class="v"><use href="#sca"/></svg><svg class="v"><use href="#str"/></svg><svg class="v"><use href="#tri"/></svg><svg class="v"><use href="#ext2"/></svg><svg class="v"><use href="#bk1"/></svg><svg class="v"><use href="#bk2"/></svg><svg class="v"><use href="#joi"/></svg><svg class="v"><use href="#cha"/></svg><svg class="v"><use href="#fil"/></svg><svg class="v"><use href="#exp"/></svg>
        <b class="hgrip mid"></b>
        <svg class="v"><use href="#o1"/></svg><svg class="v"><use href="#o2"/></svg><svg class="v"><use href="#o3"/></svg><svg class="v"><use href="#o4"/></svg>
      </div>
    </aside>
  </main>

  <footer class="status"></footer>

  <div class="mark">
    <svg class="mark-logo" viewBox="0 0 36 38"><path d="M8 6v22c0 5 3 7 7 7h3" fill="none" stroke="#c9ccd4" stroke-width="3" stroke-linecap="round"/><path d="M10 4c0-1 3-3 5-2l17 13c3 2 3 6 0 8L19 31" fill="none" stroke="#c9ccd4" stroke-width="3" stroke-linecap="round"/><path d="M14 13v12" stroke="#c9ccd4" stroke-width="2.500"/><path d="M18 15l7 4-7 4z" fill="#c9ccd4"/><path d="M26 15v8" stroke="#c9ccd4" stroke-width="1.600"/></svg>
    <div class="mark-t">
      <div class="mark-cn">溜溜自学</div>
      <div class="mark-en">ZIXUE.3D66.COM</div>
    </div>
  </div>
</div>
</body>
</html>
```
FILE: styles.css
```css
* { box-sizing: border-box; }
html, body { margin: 0; padding: 0; }
body { width: 1000px; height: 454px; overflow: hidden; background: #f0f0f0; }
.defs { position: absolute; width: 0; height: 0; }

.app {
  position: relative;
  width: 1000px;
  height: 454px;
  overflow: hidden;
  display: flex;
  flex-direction: column;
  background: #f0f0f0;
  border-left: 2px solid #e8528f;
  border-right: 3px solid #cf6f8d;
  font-family: "Noto Sans CJK SC", "Liberation Sans", sans-serif;
  filter: blur(.45px);
}

.menu {
  height: 8px;
  flex: none;
  display: flex;
  gap: 10.4px;
  padding-left: 6px;
  background: #f8f8f8;
  overflow: hidden;
  font-size: 9px;
  line-height: 14px;
  color: #222;
}
.menu span { margin-top: -6px; white-space: nowrap; }

.row {
  flex: none;
  display: flex;
  gap: 2px;
  height: 19px;
  margin-top: 2px;
  padding-left: 2px;
}
.tb {
  display: flex;
  align-items: center;
  height: 19px;
  background: #f1f1f1;
  border-bottom: 1px solid #a9a9a9;
  border-right: 1px solid #c4c4c4;
}
.tb-a { width: 480px; }
.tb-b { width: 296px; }
.tb-c { width: 172px; }
.tb-d { width: 435px; margin-left: 2px; }
.tb-e { width: 411px; }
.tb-f { width: 285px; margin-left: 2px; }

.grip {
  flex: none;
  width: 6px;
  height: 15px;
  margin: 0 2px;
  border-left: 1px solid #b6b6b6;
  border-right: 1px solid #b6b6b6;
}
.tb-a .grip, .tb-e .grip { margin-right: 0; }
.i { flex: none; width: 17px; height: 16px; opacity: .85; }
.i.nar { width: 9px; }
.sep { flex: none; width: 1px; height: 16px; margin: 0 2px; background: #a8a8a8; }

.combo {
  flex: none;
  display: flex;
  align-items: center;
  height: 17px;
  padding-left: 3px;
  background: #f6f6f6;
  overflow: hidden;
}
.ml { margin-left: 2px; }
.w76 { width: 76px; }
.w73 { width: 73px; }
.w74 { width: 74px; }
.w127 { width: 127px; margin-right: 1px; }
.w110 { width: 110px; }
.w115 { width: 115px; }
.w93 { width: 93px; }
.w88 { width: 88px; }
.w221 { width: 221px; margin: 0 1px; }
.mono {
  font-family: "Liberation Mono", "Noto Sans CJK SC", monospace;
  font-size: 9px;
  letter-spacing: -.9px;
  color: #6e6e6e;
  white-space: nowrap;
  padding-left: 1px;
}
.cjk { font-size: 9px; color: #707070; padding-left: 3px; }
.chev {
  flex: none;
  position: relative;
  width: 14px;
  height: 15px;
  margin-left: auto;
  background: #fdfdfd;
}
.chev::after {
  content: "";
  position: absolute;
  left: 4px;
  top: 4px;
  width: 5px;
  height: 5px;
  border-right: 1px solid #9a9a9a;
  border-bottom: 1px solid #9a9a9a;
  transform: rotate(45deg);
}
.sw { flex: none; width: 8px; height: 8px; margin-right: 2px; border: 1px solid #333; background: #fff; }
.ln { flex: none; width: 43px; height: 1px; margin: 0 4px 0 1px; background: #555; }
.ln.short { width: 27px; margin-right: 3px; }
.s { flex: none; width: 13px; height: 16px; margin-right: -1px; opacity: .9; }
.zero { font-size: 9px; color: #777; padding-left: 4px; font-family: "Liberation Sans", sans-serif; }

.main {
  flex: none;
  display: flex;
  height: 366px;
  margin-top: 2px;
  gap: 2px;
}
.dock { flex: none; display: flex; gap: 2px; padding-left: 1px; }
.dock-l { width: 39px; }
.dock-r { width: 37px; padding-left: 0; }
.col {
  flex: none;
  display: flex;
  flex-direction: column;
  align-items: center;
  width: 18px;
  align-self: flex-start;
  background: #f3f3f3;
  border-bottom: 1px solid #c8c8c8;
  border-right: 1px solid #d0d0d0;
}
.dock-l .col:first-child { width: 17px; }
.dock-l .col:first-child .v { opacity: .72; }
.dock-r .v, .dock-l .col + .col .v { opacity: .85; }
.hgrip { flex: none; width: 15px; height: 6px; border-top: 1px solid #b8b8b8; border-bottom: 1px solid #b8b8b8; }
.hgrip.mid { margin: 4px 0 3px; }
.hgrip.wide { margin-top: 6px; }
.hsep { flex: none; width: 15px; height: 1px; margin: 1px 0; background: #c0c0c0; }
.hsep.big { margin: 2px 0; }
.hsep.wider { margin: 3px 0; }
.hsep.clear { background: none; margin: 2px 0 3px; }
.v { flex: none; display: block; width: 16px; height: 16.3px; }
.atext {
  font-family: "Liberation Sans", sans-serif;
  font-size: 15px;
  font-weight: 700;
  line-height: 17px;
  text-align: center;
  color: #222;
}

.win {
  flex: none;
  display: flex;
  flex-direction: column;
  width: 915px;
  height: 364px;
  margin-top: 1px;
  padding: 0 8px 6px 7px;
  border: 1px solid #6d7a84;
  border-top: 2px solid #6f7a84;
  border-bottom: 2px solid #2c6f78;
  background: linear-gradient(#a3bcd9, #c0d6ea 24px, #b9d5ee);
}
.title {
  flex: none;
  display: flex;
  align-items: center;
  height: 21px;
  position: relative;
}
.app-ico { width: 14px; height: 14px; margin-left: 1px; }
.title-t {
  position: absolute;
  left: 380px;
  top: 2px;
  font-family: "Open Sans", sans-serif;
  font-size: 11.5px;
  color: #2f3f50;
}
.wbtns { display: flex; gap: 2px; margin-left: auto; margin-right: -2px; margin-top: -1px; }
.wb {
  display: flex;
  align-items: center;
  justify-content: center;
  width: 24px;
  height: 13px;
  border: 1px solid #8fabc6;
  background: linear-gradient(#bcd2e7, #a8c0d8);
}
.wb.close { height: 14px; border-color: #a8493a; background: linear-gradient(#dd7a5e, #c0402a); }
.g-min { width: 8px; height: 3px; background: #8092a6; border: 1px solid #6d7f92; }
.g-max { width: 9px; height: 7px; border: 2px solid #6f8196; background: #d0dce8; }
.g-x { font: 700 12px/12px "Liberation Sans", sans-serif; color: #f4e8e4; }

.canvas {
  flex: none;
  position: relative;
  height: 322px;
  background: #c0c0c0;
  border-top: 1px solid #6a6a6a;
  border-bottom: 2px solid #161616;
}
.draw { display: block; width: 898px; height: 319px; }
.ut { font: 8px "Liberation Sans", sans-serif; }
.ut-y { fill: #7ec87e; }
.ut-z { fill: #6ea8e0; font-size: 9px; }
.ut-x { fill: #dd8a8a; font-size: 9px; }

.cmd {
  position: absolute;
  left: 688px;
  top: 219px;
  display: flex;
  gap: 2px;
  height: 16px;
  font-family: "Open Sans", "Noto Sans CJK SC", sans-serif;
  font-size: 9.500px;
  line-height: 14px;
}
.cmd span { display: block; border: 1px solid #55557a; white-space: nowrap; }
.cmd-l { width: 32px; background: #c9c6dc; color: #444; padding-left: 3px; font-size: 8.500px; font-family: "Noto Sans CJK SC", sans-serif; }
.cmd-i { width: 49px; background: #fff; padding-left: 2px; }
.cmd-i em { font-style: normal; background: #3b96f5; color: #fff; }
.cmd-g { width: 40px; background: #73e073; color: #2a3a2a; padding-left: 2px; }

.tabs {
  flex: none;
  display: flex;
  align-items: stretch;
  height: 13px;
  background: #cdd4da;
  font-size: 9.500px;
  line-height: 12px;
}
.nav { display: flex; width: 54px; margin-right: 3px; background: #f2f2f2; }
.nav span {
  flex: 1;
  text-align: center;
  font: 8px/12px "DejaVu Sans", sans-serif;
  color: #111;
  letter-spacing: -1px;
  border-right: 1px solid #c8c8c8;
}
.tab {
  position: relative;
  width: 32px;
  text-align: center;
  background: #ececec;
  color: #333;
}
.tab::before, .tab::after {
  content: "";
  position: absolute;
  top: 0;
  width: 1px;
  height: 13px;
  background: #222;
}
.tab::before { left: 0; transform: rotate(-18deg); }
.tab::after { right: 0; transform: rotate(18deg); }
.tab.on {
  width: 28px;
  background: #111;
  color: #eee;
  margin-right: 1px;
  clip-path: polygon(0 0, 100% 0, 90% 100%, 10% 100%);
}

.status {
  flex: none;
  height: 14px;
  margin-top: 2px;
  background: linear-gradient(#f4f4f4 0 2px, #8c8c8c 2px 3px, #f4f4f4 3px 10px, #bcbcbc 10px 11px, #f2f2f2 11px);
}

.mark {
  position: absolute;
  left: 763px;
  top: 357px;
  width: 180px;
  height: 85px;
  display: flex;
  align-items: center;
  background: #1e2d55;
}
.mark-logo { flex: none; width: 36px; height: 38px; margin-left: 15px; }
.mark-t { margin-left: 11px; color: #ced2db; }
.mark-cn {
  font-family: "Noto Sans CJK SC", sans-serif;
  font-weight: 700;
  font-size: 25px;
  line-height: 26px;
  letter-spacing: 1.400px;
  white-space: nowrap;
}
.mark-en {
  font-family: "Liberation Sans", sans-serif;
  font-size: 9.500px;
  line-height: 12px;
  margin-top: 1px;
  letter-spacing: 1.850px;
  color: #aeb3c0;
  white-space: nowrap;
}
```
